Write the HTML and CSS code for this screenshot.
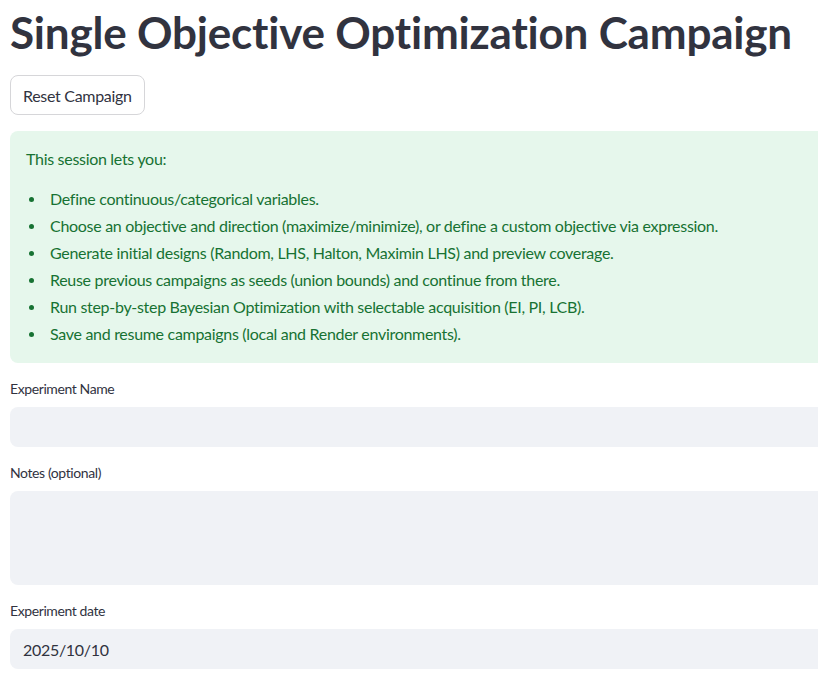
FILE: index.html
```html
<!DOCTYPE html>
<html>
<head>
<meta charset="utf-8">
<link rel="stylesheet" href="styles.css">
</head>
<body>
<main class="main">
  <h1 class="title">Single Objective Optimization Campaign</h1>
  <button class="btn">Reset Campaign</button>
  <div class="alert">
    <p class="alert-intro">This session lets you:</p>
    <ul class="alert-list">
      <li>Define continuous/categorical variables.</li>
      <li>Choose an objective and direction (maximize/minimize), or define a custom objective via expression.</li>
      <li>Generate initial designs (Random, LHS, Halton, Maximin LHS) and preview coverage.</li>
      <li>Reuse previous campaigns as seeds (union bounds) and continue from there.</li>
      <li>Run step-by-step Bayesian Optimization with selectable acquisition (EI, PI, LCB).</li>
      <li>Save and resume campaigns (local and Render environments).</li>
    </ul>
  </div>
  <div class="field">
    <label class="label">Experiment Name</label>
    <div class="input"></div>
  </div>
  <div class="field">
    <label class="label">Notes (optional)</label>
    <div class="input textarea"></div>
  </div>
  <div class="field">
    <label class="label">Experiment date</label>
    <div class="input">2025/10/10</div>
  </div>
</main>
</body>
</html>
```
FILE: styles.css
```css
html, body {
  margin: 0;
  padding: 0;
  overflow: hidden;
  background: #ffffff;
}
body {
  font-family: Lato, "Noto Sans", sans-serif;
  color: #31333f;
}
.main {
  width: 880px;
  padding: 0 0 0 10px;
  display: flex;
  flex-direction: column;
  align-items: flex-start;
}
.title {
  margin: 8px 0 0 0;
  font-size: 44px;
  line-height: 48px;
  font-weight: 700;
  color: #31333f;
  letter-spacing: -0.2px;
}
.btn {
  margin-top: 19px;
  height: 40px;
  padding: 0 12px;
  border: 1px solid #d6d6d9;
  border-radius: 8px;
  background: #ffffff;
  font-family: inherit;
  font-size: 16px;
  letter-spacing: -0.3px;
  color: #31333f;
}
.alert {
  align-self: stretch;
  margin-top: 16px;
  background: #e6f7ec;
  border-radius: 8px;
  padding: 16px 16px 14px 16px;
  color: #177233;
  font-size: 16px;
  letter-spacing: -0.3px;
}
.alert-intro {
  margin: 0;
  line-height: 24px;
}
.alert-list {
  margin: 16px 0 0 0;
  padding: 0;
  list-style: none;
}
.alert-list li {
  display: flex;
  align-items: center;
  line-height: 24px;
  margin-bottom: 3px;
}
.alert-list li::before {
  content: "";
  flex: none;
  width: 5px;
  height: 5px;
  border-radius: 50%;
  background: #177233;
  margin: 1px 16px 0 3px;
}
.field {
  align-self: stretch;
  display: flex;
  flex-direction: column;
  margin-top: 16px;
}
.label {
  font-size: 14px;
  line-height: 20px;
  letter-spacing: -0.4px;
  color: #31333f;
  margin-bottom: 8px;
}
.input {
  height: 40px;
  background: #f0f2f6;
  border-radius: 8px;
  box-sizing: border-box;
  padding: 0 13px;
  display: flex;
  align-items: center;
  font-size: 16px;
  letter-spacing: -0.3px;
  color: #31333f;
}
.textarea {
  height: 94px;
}
```
